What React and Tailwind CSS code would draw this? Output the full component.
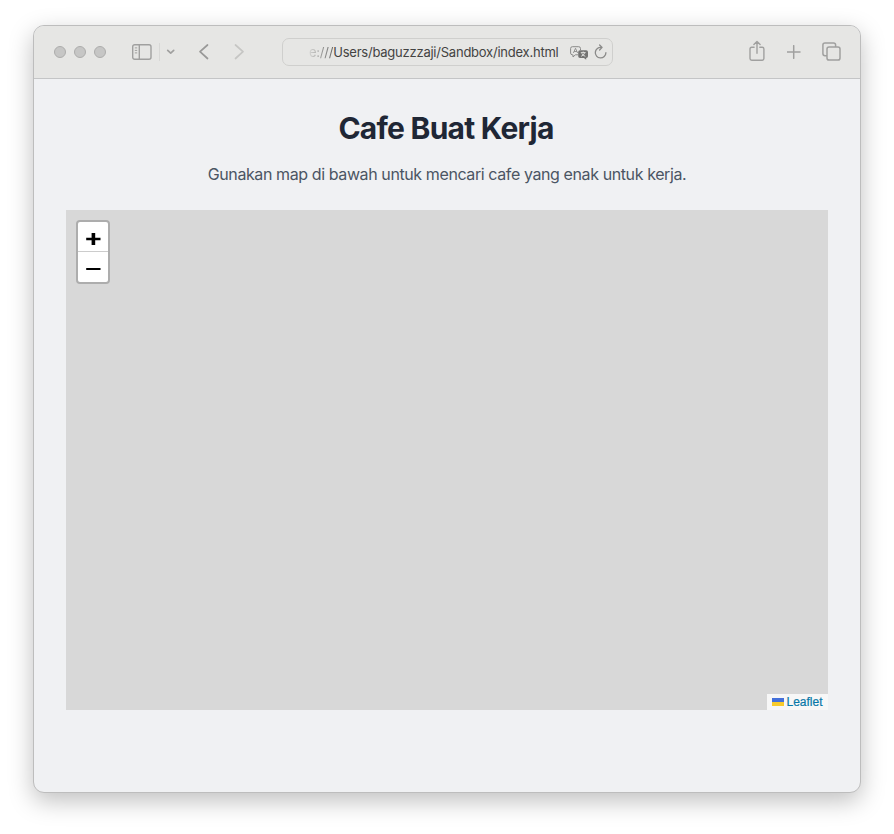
import React from "react";

function SidebarIcon() {
  return (
    <svg width="20" height="16" viewBox="0 0 20 16" fill="none" stroke="#a0a09f" strokeWidth="1.4" className="ml-[26px]">
      <rect x="0.7" y="0.7" width="18.3" height="14.6" rx="2" />
      <path d="M7.3 1v14" />
      <path d="M2.8 3.9h2.4M2.8 6.4h2.4M2.8 8.9h2.4" strokeWidth="1" />
    </svg>
  );
}

function TranslateIcon() {
  return (
    <svg width="19" height="14" viewBox="0 0 19 14" fill="none" className="ml-auto mt-px">
      <path d="M8 8.8H5.4L3 11V8.8H2.4Q.6 8.8.6 7V2.5Q.6.7 2.4.7H8.7Q10.5.7 10.5 2.5V4" stroke="#8a8a89" strokeWidth="1" />
      <path d="M3.4 7 5.5 2.3 7.6 7M4.1 5.5h2.8" stroke="#8a8a89" strokeWidth="0.9" />
      <path d="M10 4.2h6.2a1.8 1.8 0 0 1 1.8 1.8v4.2a1.8 1.8 0 0 1-1.8 1.8v1.7L13.9 12H10a1.8 1.8 0 0 1-1.8-1.8V6A1.8 1.8 0 0 1 10 4.2Z" fill="#737372" />
      <path d="M10.8 6.6h4.8M13.2 5.5v1.1M11.2 10.3q3-1.2 3.5-3.7M11.8 7.3q.8 2 3.5 3" stroke="#e6e6e4" strokeWidth="0.9" />
    </svg>
  );
}

function Toolbar() {
  return (
    <div className="flex h-[53px] items-center border-b border-[#c4c5c6] bg-[#e6e6e4] pl-5 pr-[19px]">
      <div className="flex gap-2">
        <span className="size-3 rounded-full border border-[#adadac] bg-[#c6c6c5]" />
        <span className="size-3 rounded-full border border-[#adadac] bg-[#c6c6c5]" />
        <span className="size-3 rounded-full border border-[#adadac] bg-[#c6c6c5]" />
      </div>
      <SidebarIcon />
      <span className="ml-[7px] h-[18px] w-px bg-[#d8d8d6]" />
      <svg width="10" height="6" viewBox="0 0 10 6" fill="none" stroke="#a0a09f" strokeWidth="1.7" strokeLinecap="round" strokeLinejoin="round" className="ml-1.5">
        <path d="M1.7 1.4 4.7 4.2 7.7 1.4" />
      </svg>
      <svg width="12" height="18" viewBox="0 0 12 18" fill="none" stroke="#999998" strokeWidth="1.7" strokeLinecap="round" strokeLinejoin="round" className="-mt-px ml-[22px]">
        <path d="M9.5 2 2 8.7 9.5 15.5" />
      </svg>
      <svg width="12" height="18" viewBox="0 0 12 18" fill="none" stroke="#c6c6c4" strokeWidth="1.7" strokeLinecap="round" strokeLinejoin="round" className="-mt-px ml-6">
        <path d="M1.5 2 9 8.7 1.5 15.5" />
      </svg>
      <div className="ml-9 flex h-7 w-[331px] items-center rounded-[7px] border border-[#cfcfcd] pl-[26px] pr-[5px]">
        <span className="whitespace-nowrap font-[Inter,sans-serif] text-[13px] leading-4 tracking-[-0.23px] text-[#434342]">
          <span className="bg-linear-to-r from-[#d5d5d3] to-[#666665] bg-clip-text text-transparent">e:///</span>Users/baguzzzaji/Sandbox/index.html
        </span>
        <TranslateIcon />
        <svg width="13" height="16" viewBox="0 0 13 16" fill="none" stroke="#8a8a89" strokeWidth="1.3" strokeLinecap="round" strokeLinejoin="round" className="ml-[5px]">
          <path d="M7.4 3.4A5.3 5.3 0 1 0 11.9 8.7M5.6 1 8.1 3.4 5.6 6" />
        </svg>
      </div>
      <svg width="16" height="22" viewBox="0 0 16 22" fill="none" stroke="#a0a09f" strokeWidth="1.4" strokeLinecap="round" strokeLinejoin="round" className="-mt-[3px] ml-auto">
        <path d="M5.1 7.2H2.7Q1 7.2 1 8.9V18.5Q1 20.2 2.7 20.2H13.2Q14.9 20.2 14.9 18.5V8.9Q14.9 7.2 13.2 7.2H10.8M8 13.2V1.5M4.9 4.5 8 1.4 11.1 4.5" />
      </svg>
      <svg width="14" height="14" viewBox="0 0 14 14" stroke="#a0a09f" strokeWidth="1.5" strokeLinecap="round" className="ml-[22px]">
        <path d="M6.7 .7v12.6M.4 7h12.6" />
      </svg>
      <svg width="19" height="19" viewBox="0 0 19 19" fill="none" stroke="#a0a09f" strokeWidth="1.5" className="-mt-px ml-[21px]">
        <path d="M5 13.7H3Q.9 13.7.9 11.6V3Q.9.9 3 .9H11.5Q13.6.9 13.6 3V5" />
        <rect x="5" y="5" width="13" height="13" rx="2.1" />
      </svg>
    </div>
  );
}

function MapView() {
  return (
    <div className="mx-8 mt-6 flex h-[500px] flex-col justify-between bg-[#d8d8d8]">
      <div className="ml-2.5 mt-2.5 flex h-16 w-[34px] flex-col overflow-hidden rounded-[4px] border-2 border-[#adadad] bg-white">
        <button aria-label="Zoom in" className="flex h-[30px] items-center justify-center border-b border-[#ccc]">
          <svg width="16" height="14" viewBox="0 0 16 14" className="mt-[5px]">
            <path d="M1.2 7h14.3" stroke="#000" strokeWidth="2.4" />
            <path d="M8.4 .9v12.2" stroke="#000" strokeWidth="3.6" />
          </svg>
        </button>
        <button aria-label="Zoom out" className="flex h-[30px] items-center justify-center">
          <svg width="16" height="4" viewBox="0 0 16 4" className="mt-[4px]">
            <path d="M1.2 2h14.3" stroke="#000" strokeWidth="2" />
          </svg>
        </button>
      </div>
      <div className="flex h-4 w-[61px] items-center self-end bg-[#f7f7f7] pl-[5px]">
        <span className="flex h-2 w-3 flex-col">
          <span className="h-1 bg-[#4470da]" />
          <span className="h-1 bg-[#f8cb2c]" />
        </span>
        <span className="ml-[2.5px] font-['Liberation_Sans',sans-serif] text-[12px] leading-4 text-[#0878a8] [-webkit-text-stroke:0.2px]">Leaflet</span>
      </div>
    </div>
  );
}

export default function App() {
  return (
    <div className="h-[834px] w-[894px] overflow-hidden bg-white px-[33px] pt-[25px]">
      <main className="h-[768px] w-[828px] overflow-hidden rounded-[11px] border border-[#bdbdbd] bg-[#f0f1f3] shadow-[0_8px_24px_rgba(0,0,0,0.25)]">
        <Toolbar />
        <h1 className="mt-[31px] pr-[2px] text-center font-[Inter,sans-serif] text-[30px] font-bold leading-9 tracking-[-0.75px] text-[#1f2735]">
          Cafe Buat Kerja
        </h1>
        <p className="mt-4 text-center font-[Inter,sans-serif] text-base leading-6 tracking-[-0.4px] text-[#4b5563]">
          Gunakan map di bawah untuk mencari cafe yang enak untuk kerja.
        </p>
        <MapView />
      </main>
    </div>
  );
}
